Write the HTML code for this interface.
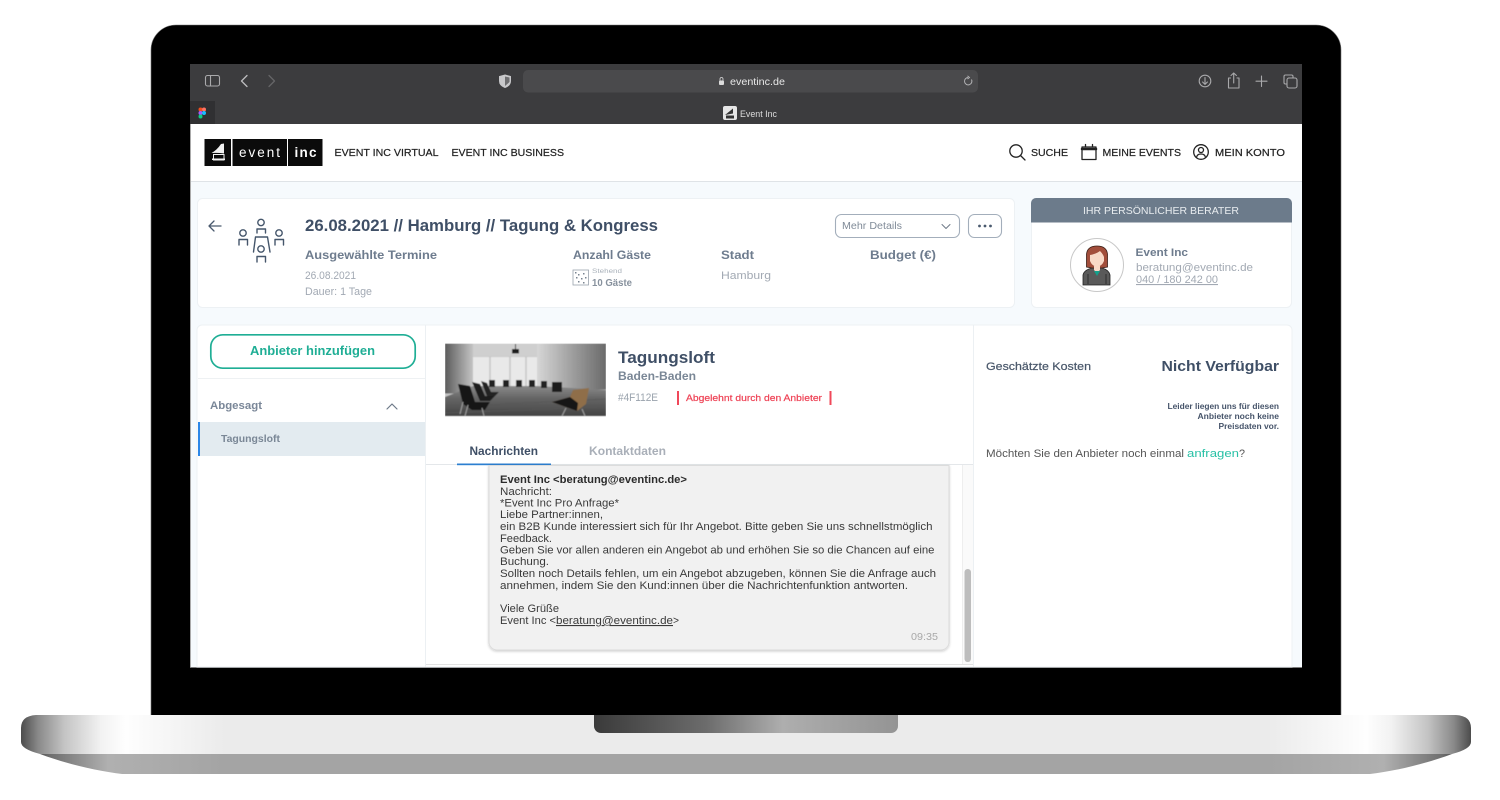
<!DOCTYPE html>
<html lang="de"><head><meta charset="utf-8"><title>Event Inc</title>
<style>
html,body{margin:0;padding:0;background:#fff;width:1500px;height:800px;overflow:hidden}
svg{display:block;position:absolute;left:0;top:0}
text{font-family:"Liberation Sans",sans-serif;white-space:pre}
.b{font-weight:700}
.m{stroke:currentColor;stroke-width:.22}
.i{fill:none;stroke-linecap:round;stroke-linejoin:round}
</style></head><body>
<svg width="1500" height="800" viewBox="0 0 1500 800" xmlns="http://www.w3.org/2000/svg">
<defs>
<linearGradient id="bu" x1="21" x2="1471" y1="0" y2="0" gradientUnits="userSpaceOnUse">
<stop offset="0" stop-color="#4c4c4c"/><stop offset=".012" stop-color="#8a8a8a"/><stop offset=".03" stop-color="#c4c4c4"/><stop offset=".055" stop-color="#f2f2f2"/><stop offset=".072" stop-color="#fefefe"/><stop offset=".14" stop-color="#ebebeb"/><stop offset=".86" stop-color="#ebebeb"/><stop offset=".928" stop-color="#fefefe"/><stop offset=".945" stop-color="#f2f2f2"/><stop offset=".97" stop-color="#c4c4c4"/><stop offset=".988" stop-color="#8a8a8a"/><stop offset="1" stop-color="#4c4c4c"/>
</linearGradient>
<linearGradient id="bl" x1="21" x2="1471" y1="0" y2="0" gradientUnits="userSpaceOnUse">
<stop offset="0" stop-color="#2e2e2e"/><stop offset=".02" stop-color="#6e6e6e"/><stop offset=".06" stop-color="#b0b0b0"/><stop offset=".14" stop-color="#a4a4a4"/><stop offset=".86" stop-color="#a4a4a4"/><stop offset=".94" stop-color="#b0b0b0"/><stop offset=".98" stop-color="#6e6e6e"/><stop offset="1" stop-color="#2e2e2e"/>
</linearGradient>
<linearGradient id="nt" x1="0" x2="1" y1="0" y2="0">
<stop offset="0" stop-color="#3a3a3a"/><stop offset=".37" stop-color="#6c6c6c"/><stop offset=".62" stop-color="#aeaeae"/><stop offset="1" stop-color="#949494"/>
</linearGradient>
<linearGradient id="rw" x1="0" x2="1" y1="0" y2="0"><stop offset="0" stop-color="#d6d6d6"/><stop offset="1" stop-color="#6a6a6a"/></linearGradient>
<linearGradient id="lw" x1="0" x2="1" y1="0" y2="0"><stop offset="0" stop-color="#5c5c5c"/><stop offset="1" stop-color="#c4c4c4"/></linearGradient>
<linearGradient id="fl" x1="0" x2="0" y1="0" y2="1"><stop offset="0" stop-color="#8a8a8a"/><stop offset=".4" stop-color="#666"/><stop offset="1" stop-color="#434343"/></linearGradient>
<filter id="sf" x="-5%" y="-5%" width="110%" height="110%"><feGaussianBlur stdDeviation=".5"/></filter>
<filter id="sd" x="-3%" y="-3%" width="106%" height="106%"><feDropShadow dx="0" dy="1" stdDeviation="1.2" flood-color="#000" flood-opacity=".2"/></filter>
<clipPath id="av"><circle cx="1097" cy="265" r="26"/></clipPath>
<clipPath id="ph"><rect x="445" y="343.500" width="161" height="73"/></clipPath>
</defs>

<!-- laptop -->
<path d="M176 25H1316a25 25 0 0 1 25 25V716H151V50a25 25 0 0 1 25-25z" fill="#000" stroke="#777" stroke-width=".6"/>
<path d="M36 715H1456Q1471 716 1471 728V742Q1471 749 1452 754H40Q21 749 21 742V728Q21 716 36 715z" fill="url(#bu)"/>
<path d="M40 754H1452C1425 764 1395 771 1370 774H122C97 771 67 764 40 754z" fill="url(#bl)"/>
<path d="M594 715H898V726a7 7 0 0 1-7 7H601a7 7 0 0 1-7-7z" fill="url(#nt)"/>

<!-- screen -->
<rect x="190" y="64" width="1112" height="603" fill="#f6fafd"/>
<rect x="190" y="64" width="1112" height="60" fill="#3c3c3e"/>
<rect x="190" y="101" width="25" height="23" fill="#303032"/>
<rect x="190" y="667" width="1112" height=".8" fill="#999"/>
<rect x="190" y="124" width="1" height="543" fill="#aaa"/>

<!-- browser icons -->
<g class="i" stroke="#a9a9ab" stroke-width="1.1">
<rect x="205.500" y="75.500" width="14" height="10.500" rx="2"/><path d="M210.500 75.500V86"/>
<path d="M247 75.500L241.500 81L247 86.500" stroke="#bdbdbf" stroke-width="1.300"/>
<path d="M269 75.500L274.500 81L269 86.500" stroke="#656567" stroke-width="1.300"/>
<circle cx="1205" cy="81" r="5.800"/><path d="M1205 77.500V84M1202.600 82L1205 84.400L1207.400 82"/>
<path d="M1230.500 78H1228.500V88H1239V78H1237M1233.700 83V73M1231 75.500L1233.700 73L1236.400 75.500"/>
<path d="M1261.500 76V86.500M1256 81.200H1267"/>
<path d="M1287 84H1285.500a1.500 1.500 0 0 1-1.500-1.500V76.500A1.500 1.500 0 0 1 1285.500 75H1291.500A1.500 1.500 0 0 1 1293 76.500V78"/><rect x="1287" y="78" width="10" height="10" rx="2"/>
</g>
<path d="M505 75L510.500 76.500V81Q510.500 85.500 505 87.500Q499.500 85.500 499.500 81V76.500z" fill="#c8c8ca" stroke="#c8c8ca"/>
<path d="M505 76.500V86L509.500 82V77.500z" fill="#6e6e70"/>
<rect x="523" y="70" width="455" height="22.500" rx="5" fill="#4a4a4c"/>
<rect x="719" y="80.500" width="5" height="4.500" rx="1" fill="#dcdcdc"/><path d="M720 80.500V79a1.500 1.500 0 0 1 3 0V80.500" fill="none" stroke="#dcdcdc" stroke-width=".8"/>
<text x="730" y="85" font-size="10.500" fill="#e8e8e8" textLength="55" lengthAdjust="spacingAndGlyphs">eventinc.de</text>
<path d="M971.500 79.500A3.700 3.700 0 1 1 968 77.500" fill="none" stroke="#b4b4b6" stroke-width="1"/><path d="M967.500 75.800L969.500 77.500L967.500 79" fill="none" stroke="#b4b4b6" stroke-width=".9"/>
<!-- figma -->
<circle cx="200.500" cy="109.500" r="2" fill="#f24e1e"/><circle cx="204" cy="109.500" r="2" fill="#ff7262"/><circle cx="200.500" cy="113" r="2" fill="#a259ff"/><circle cx="204" cy="113" r="2" fill="#1abcfe"/><circle cx="200.500" cy="116.500" r="2" fill="#0acf83"/>
<!-- tab -->
<rect x="723" y="106" width="14" height="14" rx="2" fill="#e6e6e6"/><path d="M725 115L733 108.500V113.500z" fill="#333"/><rect x="726" y="115.500" width="8" height="3" fill="#333"/>
<text x="740" y="117" font-size="9" fill="#ddd" textLength="37" lengthAdjust="spacingAndGlyphs">Event Inc</text>

<!-- header -->
<rect x="191" y="124" width="1111" height="57" fill="#fff"/><rect x="191" y="181" width="1111" height="1" fill="#dfe3e7"/>
<rect x="204.500" y="139" width="26.500" height="27" fill="#0b0b0b"/><rect x="232.500" y="139" width="54.500" height="27" fill="#0b0b0b"/><rect x="288" y="139" width="34.500" height="27" fill="#0b0b0b"/>
<path d="M211.500 153Q217 150 221 144L224 143.500V153.500Q218 152.500 211.500 153z" fill="#f2f2f2"/>
<path d="M213.500 154.500H224V160H213.500z" fill="none" stroke="#f2f2f2" stroke-width="1"/><rect x="212" y="158.500" width="13" height="1.500" fill="#f2f2f2"/>
<text x="239" y="157" font-size="13.500" fill="#fff" textLength="41" lengthAdjust="spacing">event</text>
<text x="294.500" y="157" class="b" font-size="13.500" fill="#fff" textLength="22" lengthAdjust="spacing">inc</text>
<g font-size="10.500" fill="#222" color="#222" class="m">
<text x="334.500" y="156" textLength="104" lengthAdjust="spacingAndGlyphs">EVENT INC VIRTUAL</text>
<text x="451.500" y="156" textLength="112.500" lengthAdjust="spacingAndGlyphs">EVENT INC BUSINESS</text>
<text x="1031" y="156" textLength="37" lengthAdjust="spacingAndGlyphs">SUCHE</text>
<text x="1102.500" y="156" textLength="78.500" lengthAdjust="spacingAndGlyphs">MEINE EVENTS</text>
<text x="1215" y="156" textLength="70" lengthAdjust="spacingAndGlyphs">MEIN KONTO</text>
</g>
<g class="i" stroke="#222" stroke-width="1.300">
<circle cx="1016" cy="151" r="6.200"/><path d="M1020.500 155.500L1025 160"/>
<rect x="1082" y="147" width="14" height="12.500"/><path d="M1082 149H1096" stroke-width="2.500"/><path d="M1085.500 144.500V147M1092.500 144.500V147"/>
<circle cx="1201" cy="152" r="7.300"/><circle cx="1201" cy="150" r="2.500"/><path d="M1196.500 157.500Q1197 154 1201 154Q1205 154 1205.500 157.500"/>
</g>

<!-- event card -->
<rect x="197.500" y="198.500" width="817" height="109" rx="5" fill="#fff" stroke="#edf1f4"/>
<path d="M221 226H209.500M214 221L209 226L214 231" class="i" stroke="#4a5a6e" stroke-width="1.300"/>
<g class="i" stroke="#45566b" stroke-width="1.400">
<circle cx="261" cy="222.500" r="3.200"/><path d="M257 233V229H265.500V233"/>
<circle cx="243" cy="233" r="3.200"/><path d="M239 245V239.500H247.500V245"/>
<circle cx="279" cy="233" r="3.200"/><path d="M275 245V239.500H283.500V245"/>
<path d="M255.500 237L253.500 252M267.500 237L270 252M255.500 237H267.500"/>
<circle cx="261" cy="249" r="3.200"/><path d="M257 262V256.500H265.500V262"/>
</g>
<text x="305" y="231" class="b" font-size="17" fill="#3f4f66" textLength="353" lengthAdjust="spacingAndGlyphs">26.08.2021 // Hamburg // Tagung &amp; Kongress</text>
<g class="b" font-size="12" fill="#6e7c8e">
<text x="305" y="259" textLength="132" lengthAdjust="spacingAndGlyphs">Ausgewählte Termine</text>
<text x="573" y="259" textLength="78" lengthAdjust="spacingAndGlyphs">Anzahl Gäste</text>
<text x="721" y="259" textLength="33" lengthAdjust="spacingAndGlyphs">Stadt</text>
<text x="870" y="259" textLength="66" lengthAdjust="spacingAndGlyphs">Budget (€)</text>
</g>
<g font-size="11" fill="#a2a9b3">
<text x="305" y="279" textLength="51" lengthAdjust="spacingAndGlyphs">26.08.2021</text>
<text x="305" y="295" textLength="67" lengthAdjust="spacingAndGlyphs">Dauer: 1 Tage</text>
<text x="721" y="279" textLength="50" lengthAdjust="spacingAndGlyphs">Hamburg</text>
</g>
<rect x="573" y="270" width="15.500" height="15" fill="#fff" stroke="#9aa3ad" stroke-width=".8"/>
<g fill="#7a8490"><rect x="575" y="272" width="1.500" height="1.500"/><rect x="578" y="274" width="1.500" height="1.500"/><rect x="583" y="273" width="1.500" height="1.500"/><rect x="576" y="277" width="1.500" height="1.500"/><rect x="581" y="278" width="1.500" height="1.500"/><rect x="585" y="277" width="1.500" height="1.500"/><rect x="578" y="281" width="1.500" height="1.500"/><rect x="583" y="282" width="1.500" height="1.500"/></g>
<text x="592" y="273" font-size="6.500" fill="#aab2bb" textLength="30" lengthAdjust="spacingAndGlyphs">Stehend</text>
<text x="592" y="286" class="b" font-size="10" fill="#87919d" textLength="40" lengthAdjust="spacingAndGlyphs">10 Gäste</text>
<rect x="835.500" y="214.500" width="124" height="23" rx="6" fill="#fff" stroke="#a3aebb" stroke-width="1.100"/>
<text x="842" y="229" font-size="10" fill="#808b98" textLength="60" lengthAdjust="spacingAndGlyphs">Mehr Details</text>
<path d="M942 224.500L946 228.500L950 224.500" class="i" stroke="#6e7a88" stroke-width="1"/>
<rect x="968.500" y="214.500" width="33" height="23" rx="6" fill="#fff" stroke="#a3aebb" stroke-width="1.100"/>
<circle cx="979.500" cy="226" r="1.400" fill="#4a5a6e"/><circle cx="985" cy="226" r="1.400" fill="#4a5a6e"/><circle cx="990.500" cy="226" r="1.400" fill="#4a5a6e"/>

<!-- advisor card -->
<rect x="1031.500" y="198.500" width="260" height="109" rx="5" fill="#fff" stroke="#edf1f4"/>
<path d="M1036 198H1287a5 5 0 0 1 5 5V222.500H1031V203a5 5 0 0 1 5-5z" fill="#6c7b8b"/>
<text x="1083" y="214" font-size="10.500" fill="#e8ecef" textLength="156" lengthAdjust="spacingAndGlyphs">IHR PERSÖNLICHER BERATER</text>
<circle cx="1097" cy="265" r="26.500" fill="#fff" stroke="#c8c8c8"/>
<g clip-path="url(#av)">
<path d="M1083 285V275Q1084 270 1092 268H1102Q1109 270 1110 275V285z" fill="#5a5a5a" stroke="#222" stroke-width=".8"/>
<path d="M1086.500 267V254Q1087.500 246 1097 246Q1106.500 246 1107.500 254V267L1102 268H1092z" fill="#a24e3b" stroke="#3a2018" stroke-width=".8"/>
<path d="M1090 255Q1096 254 1100 251Q1103 254 1104 257V261Q1102 266 1097 267Q1092 266 1090 261z" fill="#f8d9c7"/>
<path d="M1094 266V270L1097 273L1100 270V266z" fill="#f8d9c7"/><path d="M1094 271L1097 276L1100 271z" fill="#12a08b"/>
<path d="M1088 274V284M1106 274V284" stroke="#222" stroke-width=".8"/>
</g>
<text x="1135.500" y="256" class="b" font-size="11" fill="#6e7c8e" textLength="52.500" lengthAdjust="spacingAndGlyphs">Event Inc</text>
<text x="1136" y="271" font-size="11" fill="#a2a9b3" textLength="117" lengthAdjust="spacingAndGlyphs">beratung@eventinc.de</text>
<text x="1136" y="283" font-size="11" fill="#a2a9b3" text-decoration="underline" textLength="82" lengthAdjust="spacingAndGlyphs">040 / 180 242 00</text>

<!-- main panel -->
<path d="M202 325H1287a5 5 0 0 1 5 5V667H197V330a5 5 0 0 1 5-5z" fill="#fff" stroke="#edf1f4"/>
<rect x="425" y="325" width="1" height="342" fill="#ecf0f3"/><rect x="973" y="325" width="1" height="342" fill="#ecf0f3"/>
<rect x="210.800" y="334.800" width="204.400" height="33.400" rx="12" fill="#fff" stroke="#1fae95" stroke-width="1.700"/>
<text x="250" y="355" class="b" font-size="12.500" fill="#1fae95" textLength="125" lengthAdjust="spacingAndGlyphs">Anbieter hinzufügen</text>
<rect x="198" y="378" width="227" height="1" fill="#eef1f3"/>
<text x="210" y="409" class="b" font-size="11" fill="#7a8798" textLength="52" lengthAdjust="spacingAndGlyphs">Abgesagt</text>
<path d="M387 409L392 404L397 409" class="i" stroke="#6e7a88" stroke-width="1.200"/>
<rect x="198" y="422" width="227" height="34" fill="#e3ebf0"/><rect x="198" y="422" width="2" height="34" fill="#2c87e8"/>
<text x="221" y="442" class="b" font-size="10" fill="#7a8796" textLength="59" lengthAdjust="spacingAndGlyphs">Tagungsloft</text>

<!-- photo -->
<g filter="url(#sf)" clip-path="url(#ph)">
<rect x="445" y="343.500" width="161" height="73" fill="#c4c4c4"/>
<rect x="445" y="343.500" width="28" height="50" fill="url(#lw)"/>
<rect x="537" y="343.500" width="69" height="46" fill="url(#rw)"/>
<rect x="473" y="343.500" width="64" height="13" fill="#cfcfcf"/>
<rect x="473" y="357" width="64" height="29" fill="#e9e9e9"/>
<path d="M490 357V386M510 357V386M526 357V386" stroke="#c6c6c6" stroke-width="1.500"/>
<path d="M445 416V397L473 386H537L606 390V416z" fill="url(#fl)"/>
<path d="M445 407L606 399M445 413L606 407" stroke="#575757" stroke-width=".7"/>
<rect x="512" y="349" width="7" height="4.500" fill="#1c1c1c"/><rect x="515" y="344" width="1" height="5" fill="#222"/>
<rect x="489" y="380" width="6" height="7" fill="#232323"/><rect x="503" y="380" width="6" height="7" fill="#232323"/><rect x="516" y="380" width="6" height="7" fill="#232323"/><rect x="529" y="380" width="6" height="7" fill="#232323"/><rect x="541" y="381" width="6" height="7" fill="#232323"/><rect x="552" y="382" width="10" height="10" fill="#1c1c1c"/>
<path d="M458 384L470 386L475 402H490L485 410H472L463 404z" fill="#141414"/>
<path d="M472 382L480 384L485 396H495L490 401H480z" fill="#1a1a1a"/>
<path d="M481 381L487 383L491 392H499L495 396H487z" fill="#242424"/>
<path d="M468 405L465 416M482 408L484 416M463 402L460 414" stroke="#a0a0a0" stroke-width="1"/>
<path d="M573 390L589 388L586 404L577 411L552 402L570 397z" fill="#8f6e49"/>
<path d="M552 402L570 397L578 403L577 411z" fill="#161616"/>
<path d="M566 408L562 416M582 409L585 416" stroke="#a0a0a0" stroke-width="1"/>
</g>

<!-- venue -->
<text x="618" y="363" class="b" font-size="16.500" fill="#3f4f66" textLength="97" lengthAdjust="spacingAndGlyphs">Tagungsloft</text>
<text x="618" y="380" class="b" font-size="11.500" fill="#7a8796" textLength="78" lengthAdjust="spacingAndGlyphs">Baden-Baden</text>
<text x="618" y="401" font-size="11" fill="#9aa3ad" textLength="40" lengthAdjust="spacingAndGlyphs">#4F112E</text>
<rect x="677" y="391" width="2" height="14" fill="#f0485a"/><rect x="829.500" y="391" width="2" height="14" fill="#f0485a"/>
<text x="686" y="401" font-size="9.500" fill="#ee4356" class="m" color="#ee4356" textLength="136" lengthAdjust="spacingAndGlyphs">Abgelehnt durch den Anbieter</text>
<text x="469.500" y="455" class="b" font-size="11.500" fill="#3f4f66" textLength="68.500" lengthAdjust="spacingAndGlyphs">Nachrichten</text>
<text x="589" y="455" class="b" font-size="11.500" fill="#a9afb8" textLength="77" lengthAdjust="spacingAndGlyphs">Kontaktdaten</text>
<rect x="426" y="464" width="547" height="1" fill="#e4e7ea"/>
<rect x="457" y="463.500" width="94" height="1.700" fill="#2c7fd0"/>

<!-- message area -->
<rect x="962" y="465" width="11" height="200" fill="#fafafa"/><rect x="962" y="465" width="1" height="200" fill="#eeeeee"/>
<rect x="964.500" y="569" width="6.500" height="93" rx="3.200" fill="#bdbdbd"/>
<rect x="426" y="664" width="547" height="1" fill="#e2e2e2"/>
<path d="M489 465.500H949V642a8 8 0 0 1-8 8H497a8 8 0 0 1-8-8z" fill="#f1f1f1" stroke="#dcdcdc" filter="url(#sd)"/>
<text x="500" y="483" class="b" font-size="11" fill="#2c2c2c" textLength="187" lengthAdjust="spacingAndGlyphs">Event Inc &lt;beratung@eventinc.de&gt;</text>
<g font-size="11" fill="#3a3a3a">
<text x="500" y="495" textLength="52" lengthAdjust="spacingAndGlyphs">Nachricht:</text>
<text x="500" y="506.500" textLength="119" lengthAdjust="spacingAndGlyphs">*Event Inc Pro Anfrage*</text>
<text x="500" y="518" textLength="103" lengthAdjust="spacingAndGlyphs">Liebe Partner:innen,</text>
<text x="500" y="530" textLength="432.500" lengthAdjust="spacingAndGlyphs">ein B2B Kunde interessiert sich für Ihr Angebot. Bitte geben Sie uns schnellstmöglich</text>
<text x="500" y="542" textLength="52" lengthAdjust="spacingAndGlyphs">Feedback.</text>
<text x="500" y="553.500" textLength="434.500" lengthAdjust="spacingAndGlyphs">Geben Sie vor allen anderen ein Angebot ab und erhöhen Sie so die Chancen auf eine</text>
<text x="500" y="565" textLength="49" lengthAdjust="spacingAndGlyphs">Buchung.</text>
<text x="500" y="577" textLength="436" lengthAdjust="spacingAndGlyphs">Sollten noch Details fehlen, um ein Angebot abzugeben, können Sie die Anfrage auch</text>
<text x="500" y="589" textLength="408" lengthAdjust="spacingAndGlyphs">annehmen, indem Sie den Kund:innen über die Nachrichtenfunktion antworten.</text>
<text x="500" y="612" textLength="59" lengthAdjust="spacingAndGlyphs">Viele Grüße</text>
<text x="500" y="624" textLength="56" lengthAdjust="spacingAndGlyphs">Event Inc &lt;</text>
<text x="556" y="624" text-decoration="underline" textLength="117" lengthAdjust="spacingAndGlyphs">beratung@eventinc.de</text>
<text x="673" y="624" textLength="6" lengthAdjust="spacingAndGlyphs">&gt;</text>
</g>
<text x="911" y="640" font-size="10.500" fill="#a8a8a8" textLength="27" lengthAdjust="spacingAndGlyphs">09:35</text>

<!-- right column -->
<text x="986" y="370" font-size="11" class="m" fill="#4a586b" color="#4a586b" textLength="105" lengthAdjust="spacingAndGlyphs">Geschätzte Kosten</text>
<text x="1161.500" y="371" class="b" font-size="15" fill="#3f4f66" textLength="117.500" lengthAdjust="spacingAndGlyphs">Nicht Verfügbar</text>
<g class="b" font-size="8" fill="#46546a">
<text x="1167.500" y="409" textLength="111.500" lengthAdjust="spacingAndGlyphs">Leider liegen uns für diesen</text>
<text x="1197.500" y="419" textLength="81.500" lengthAdjust="spacingAndGlyphs">Anbieter noch keine</text>
<text x="1218.500" y="429" textLength="60.500" lengthAdjust="spacingAndGlyphs">Preisdaten vor.</text>
</g>
<text x="986" y="457" font-size="11" fill="#555" textLength="198" lengthAdjust="spacingAndGlyphs">Möchten Sie den Anbieter noch einmal</text>
<text x="1187" y="457" font-size="11" fill="#26c0a5" textLength="52" lengthAdjust="spacingAndGlyphs">anfragen</text>
<text x="1239" y="457" font-size="11" fill="#555" textLength="6" lengthAdjust="spacingAndGlyphs">?</text>
</svg>
</body></html>
